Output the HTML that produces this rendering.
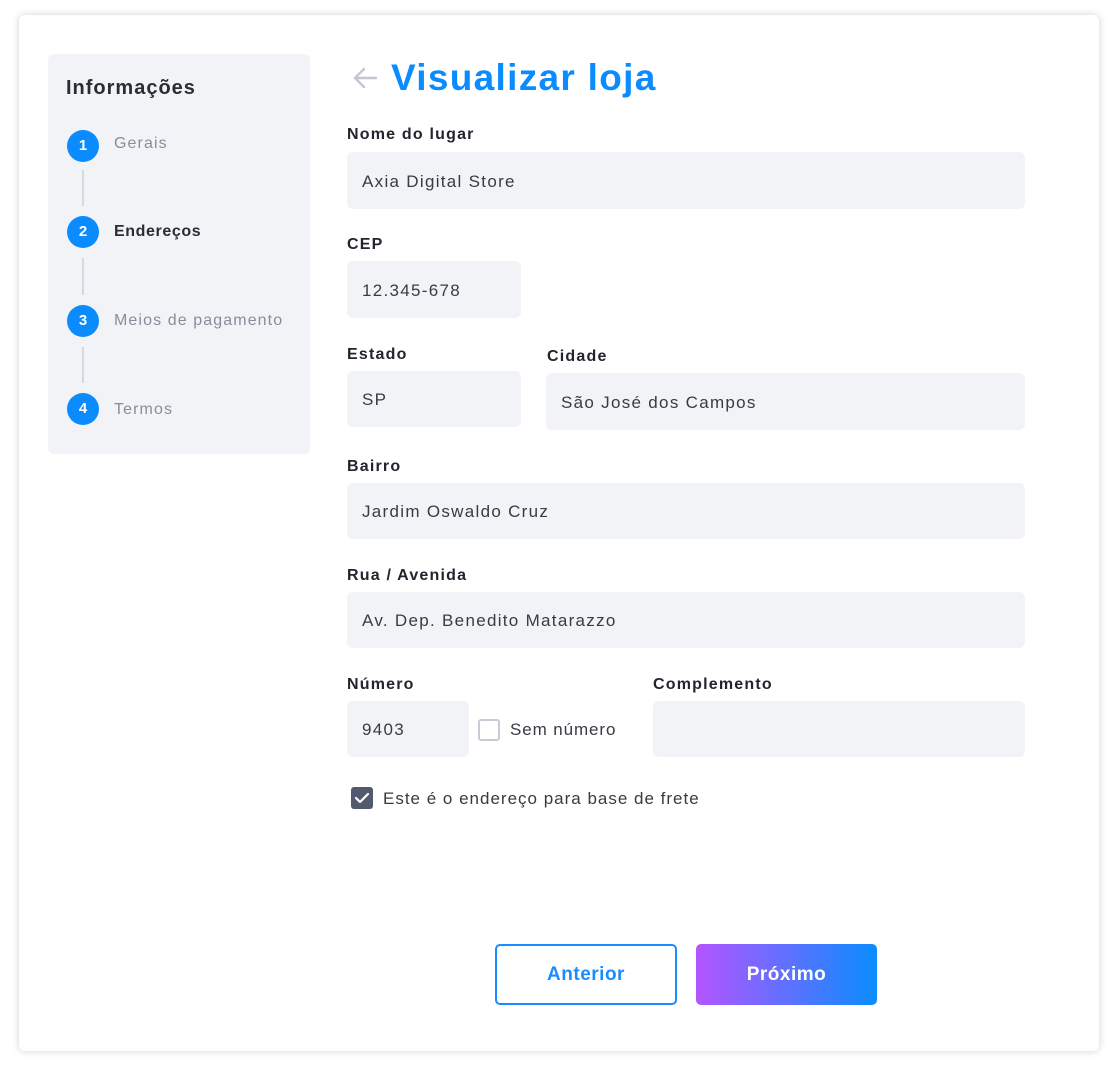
<!DOCTYPE html>
<html><head><meta charset="utf-8"><style>
*{margin:0;padding:0;box-sizing:border-box}
body{width:1118px;height:1075px;background:#fff;font-family:"Liberation Sans",sans-serif;position:relative;overflow:hidden}
.card{position:absolute;left:19px;top:15px;width:1080px;height:1036px;background:#fff;border-radius:6px;box-shadow:0 0 8px rgba(0,0,0,.18)}
.a{position:absolute}
.side{left:48px;top:54px;width:262px;height:400px;background:#f2f3f7;border-radius:6px}
.c{width:32px;height:32px;border-radius:50%;background:#0a8cff;color:#fff;font-weight:bold;font-size:15px;text-align:center;line-height:32px}
.ln{width:2px;background:#d6d8e0;left:82px}
.sl{font-size:16px;color:#8a8c99;left:114px;letter-spacing:1.1px}
.lb{font-size:16px;font-weight:bold;color:#24242e;left:347px;letter-spacing:1.2px}
.in{background:#f2f3f7;border-radius:6px;font-size:17px;color:#3a3a44;padding-left:15px;padding-top:2px;display:flex;align-items:center;letter-spacing:1.3px}
.btn{height:61px;border-radius:5px;font-weight:bold;font-size:19px;display:flex;align-items:center;justify-content:center;letter-spacing:.5px}
</style></head><body>
<div class="card"></div>
<div class="a side"></div>
<div class="a" style="left:66px;top:77px;font-size:20px;font-weight:bold;color:#2c2c36;letter-spacing:1px">Informações</div>
<div class="a ln" style="top:170px;height:36px"></div>
<div class="a ln" style="top:258px;height:37px"></div>
<div class="a ln" style="top:347px;height:36px"></div>
<div class="a c" style="left:67px;top:130px">1</div>
<div class="a c" style="left:67px;top:216px">2</div>
<div class="a c" style="left:67px;top:305px">3</div>
<div class="a c" style="left:67px;top:393px">4</div>
<div class="a sl" style="top:135px">Gerais</div>
<div class="a sl" style="top:223px;font-weight:bold;color:#2c2c36;letter-spacing:.6px">Endereços</div>
<div class="a sl" style="top:312px">Meios de pagamento</div>
<div class="a sl" style="top:401px">Termos</div>
<svg class="a" style="left:351px;top:64px" width="28" height="28" viewBox="0 0 28 28"><path d="M25 14H4M13 5L4 14l9 9" fill="none" stroke="#c4c6d6" stroke-width="2.5" stroke-linecap="round" stroke-linejoin="round"/></svg>
<div class="a" style="left:391px;top:57px;font-size:37px;font-weight:bold;color:#0a8cff;letter-spacing:1.3px">Visualizar loja</div>
<div class="a lb" style="top:126px">Nome do lugar</div>
<div class="a in" style="left:347px;top:152px;width:678px;height:57px">Axia Digital Store</div>
<div class="a lb" style="top:236px">CEP</div>
<div class="a in" style="left:347px;top:261px;width:174px;height:57px">12.345-678</div>
<div class="a lb" style="top:346px">Estado</div>
<div class="a in" style="left:347px;top:371px;width:174px;height:56px">SP</div>
<div class="a lb" style="top:348px;left:547px">Cidade</div>
<div class="a in" style="left:546px;top:373px;width:479px;height:57px">São José dos Campos</div>
<div class="a lb" style="top:458px">Bairro</div>
<div class="a in" style="left:347px;top:483px;width:678px;height:56px">Jardim Oswaldo Cruz</div>
<div class="a lb" style="top:567px">Rua / Avenida</div>
<div class="a in" style="left:347px;top:592px;width:678px;height:56px">Av. Dep. Benedito Matarazzo</div>
<div class="a lb" style="top:676px">Número</div>
<div class="a in" style="left:347px;top:701px;width:122px;height:56px">9403</div>
<div class="a" style="left:478px;top:719px;width:22px;height:22px;border:2px solid #c8cad4;border-radius:3px;background:#fff"></div>
<div class="a" style="left:510px;top:720px;font-size:17px;color:#3a3a44;letter-spacing:.9px">Sem número</div>
<div class="a lb" style="top:676px;left:653px">Complemento</div>
<div class="a in" style="left:653px;top:701px;width:372px;height:56px"></div>
<div class="a" style="left:351px;top:787px;width:22px;height:22px;border-radius:3px;background:#545a6e"></div>
<svg class="a" style="left:351px;top:787px" width="22" height="22"><path d="M5 11l4 4 8-8" fill="none" stroke="#fff" stroke-width="2.2" stroke-linecap="round" stroke-linejoin="round"/></svg>
<div class="a" style="left:383px;top:789px;font-size:17px;color:#3a3a44;letter-spacing:1px">Este é o endereço para base de frete</div>
<div class="a btn" style="left:495px;top:944px;width:182px;border:2px solid #1a8cff;color:#1a8cff">Anterior</div>
<div class="a btn" style="left:696px;top:944px;width:181px;background:linear-gradient(90deg,#b455ff,#0a8cff);color:#fff">Próximo</div>
</body></html>
